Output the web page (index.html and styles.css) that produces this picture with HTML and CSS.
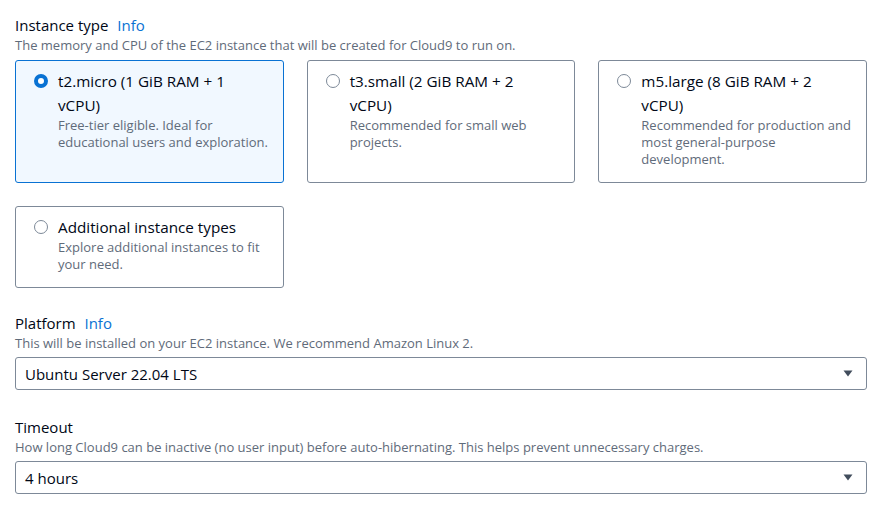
FILE: index.html
```html
<!DOCTYPE html>
<html>
<head>
<meta charset="utf-8">
<link rel="stylesheet" href="styles.css">
</head>
<body>
<div class="page">
  <section class="field">
    <div class="label">Instance type <a class="info">Info</a></div>
    <div class="desc">The memory and CPU of the EC2 instance that will be created for Cloud9 to run on.</div>
    <div class="tiles">
      <div class="tile selected">
        <span class="radio on"></span>
        <div class="tile-body">
          <div class="tile-title">t2.micro (1 GiB RAM + 1 vCPU)</div>
          <div class="tile-desc">Free-tier eligible. Ideal for educational users and exploration.</div>
        </div>
      </div>
      <div class="tile">
        <span class="radio"></span>
        <div class="tile-body">
          <div class="tile-title">t3.small (2 GiB RAM + 2 vCPU)</div>
          <div class="tile-desc">Recommended for small web projects.</div>
        </div>
      </div>
      <div class="tile">
        <span class="radio"></span>
        <div class="tile-body">
          <div class="tile-title">m5.large (8 GiB RAM + 2 vCPU)</div>
          <div class="tile-desc">Recommended for production and most general-purpose development.</div>
        </div>
      </div>
    </div>
    <div class="tiles second">
      <div class="tile">
        <span class="radio"></span>
        <div class="tile-body">
          <div class="tile-title">Additional instance types</div>
          <div class="tile-desc">Explore additional instances to fit your need.</div>
        </div>
      </div>
    </div>
  </section>
  <section class="field platform">
    <div class="label">Platform <a class="info">Info</a></div>
    <div class="desc">This will be installed on your EC2 instance. We recommend Amazon Linux 2.</div>
    <div class="select"><span>Ubuntu Server 22.04 LTS</span><svg class="caret" width="10" height="7" viewBox="0 0 10 7"><path d="M0.5 0.5 L9.5 0.5 L5 6.5 Z" fill="#414d5c"/></svg></div>
  </section>
  <section class="field timeout">
    <div class="label">Timeout</div>
    <div class="desc">How long Cloud9 can be inactive (no user input) before auto-hibernating. This helps prevent unnecessary charges.</div>
    <div class="select"><span>4 hours</span><svg class="caret" width="10" height="7" viewBox="0 0 10 7"><path d="M0.5 0.5 L9.5 0.5 L5 6.5 Z" fill="#414d5c"/></svg></div>
  </section>
</div>
</body>
</html>
```
FILE: styles.css
```css
html, body { margin: 0; padding: 0; background: #fff; }
body { font-family: "Open Sans", "Noto Sans", sans-serif; color: #000716; }
.page { padding: 14px 18px 0 15px; }
.label { font-size: 15px; line-height: 22px; color: #000716; }
.info { color: #0972d3; margin-left: 5px; }
.desc { font-size: 13px; line-height: 18px; color: #5f6b7a; margin-top: 0; }
.tiles { display: grid; grid-template-columns: 1fr 1fr 1fr; column-gap: 23px; margin-top: 6px; }
.tiles.second { margin-top: 23px; }
.tile { display: flex; border: 1px solid #7d8998; border-radius: 3px; padding: 8px 6px 14px 18px; background: #fff; }
.tile.selected { border-color: #0972d3; background: #f1f8ff; }
.radio { flex: none; width: 12px; height: 12px; border: 1px solid #7d8998; border-radius: 50%; margin: 5px 10px 0 0; background: #fff; }
.radio.on { border: 4px solid #0972d3; width: 6px; height: 6px; }
.tile-title { font-size: 15.25px; line-height: 24px; padding-right: 10px; }
.tile-desc { font-size: 13px; line-height: 17px; color: #5f6b7a; }
.platform { margin-top: 24px; }
.timeout { margin-top: 26px; }
.select { display: flex; align-items: center; justify-content: space-between; height: 31px; border: 1px solid #7d8998; border-radius: 3px; padding: 0 13px 0 9px; margin-top: 5px; font-size: 15px; }
.caret { display: block; }
```
